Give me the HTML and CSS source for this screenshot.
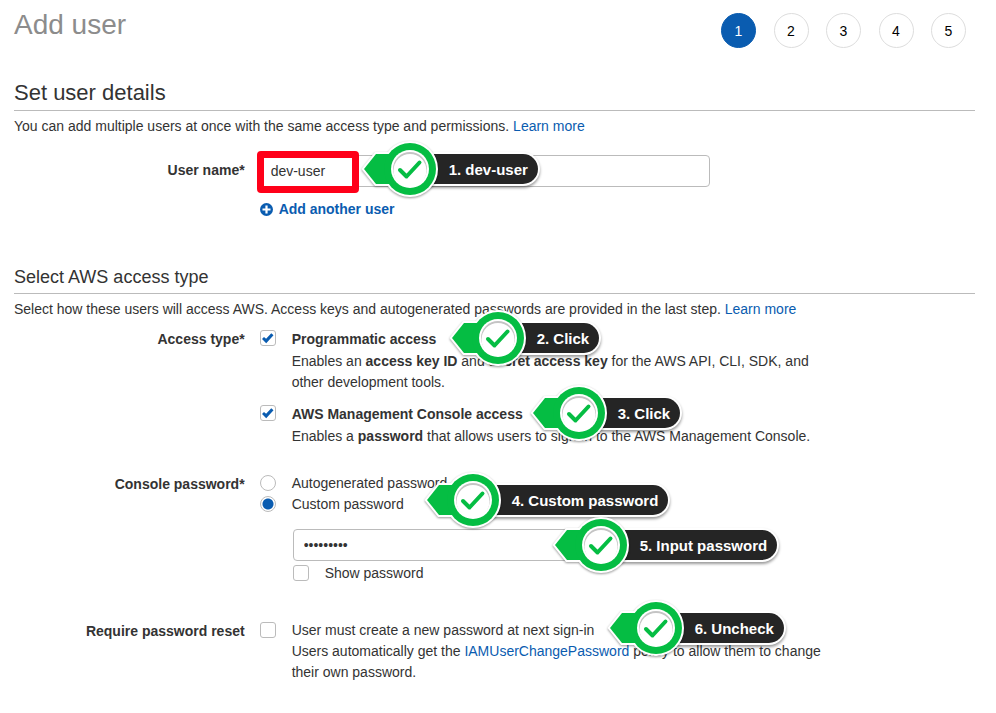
FILE: index.html
```html
<!DOCTYPE html>
<html lang="en">
<head>
<meta charset="utf-8">
<title>Add user</title>
<link rel="stylesheet" href="styles.css">
</head>
<body>
<svg class="defs" aria-hidden="true">
  <defs>
    <symbol id="pointer" viewBox="0 0 80 64">
      <path class="outline" d="M4 32 16 17H40V47H16Z"/>
      <circle class="outline" cx="50" cy="32" r="26"/>
      <path class="green" d="M4 32 16 17H40V47H16Z"/>
      <circle class="green" cx="50" cy="32" r="26"/>
      <circle cx="50" cy="32" r="19" fill="#fff"/>
      <circle cx="50" cy="32" r="17" fill="#c4c4c4"/>
      <circle cx="50" cy="33.500" r="16.500" fill="#fff"/>
      <path class="tick" d="M40 33 46.500 39.500 59.500 25.500"/>
    </symbol>
  </defs>
</svg>
<header class="top">
  <h1>Add user</h1>
  <ol class="steps">
    <li class="current" aria-current="step">1</li>
    <li>2</li>
    <li>3</li>
    <li>4</li>
    <li>5</li>
  </ol>
</header>
<main>
  <form>
    <section class="details">
      <h2>Set user details</h2>
      <p class="intro">You can add multiple users at once with the same access type and permissions. <a href="#">Learn more</a></p>
      <div class="row name-row">
        <label class="name" for="user">User name*</label>
        <div class="field">
          <input class="text" id="user" type="text" value="dev-user">
          <span class="highlight"></span>
          <div class="callout c1"><svg><use href="#pointer"/></svg><span>1. dev-user</span></div>
          <button class="add" type="button">
            <svg viewBox="0 0 14 14" aria-hidden="true"><circle cx="6.500" cy="6.500" r="6.500" fill="#0a5cb0"/><path d="M6.500 2.500V10.500M2.500 6.500H10.500" stroke="#fff" stroke-width="2.200"/></svg>
            Add another user
          </button>
        </div>
      </div>
    </section>
    <section class="access">
      <h3>Select AWS access type</h3>
      <p class="intro">Select how these users will access AWS. Access keys and autogenerated passwords are provided in the last step. <a href="#">Learn more</a></p>
      <div class="row access-row">
        <span class="name">Access type*</span>
        <div class="field">
          <div class="option">
            <input id="prog" type="checkbox" checked>
            <div>
              <label class="strong" for="prog">Programmatic access</label>
              <p>Enables an <b>access key ID</b> and <b>secret access key</b> for the AWS API, CLI, SDK, and other development tools.</p>
            </div>
            <div class="callout c2"><svg><use href="#pointer"/></svg><span>2. Click</span></div>
          </div>
          <div class="option second">
            <input id="console" type="checkbox" checked>
            <div>
              <label class="strong" for="console">AWS Management Console access</label>
              <p>Enables a <b>password</b> that allows users to sign-in to the AWS Management Console.</p>
            </div>
            <div class="callout c3"><svg><use href="#pointer"/></svg><span>3. Click</span></div>
          </div>
        </div>
      </div>
      <div class="row password-row">
        <span class="name">Console password*</span>
        <div class="field">
          <div class="option">
            <input id="auto" type="radio" name="pw">
            <label for="auto">Autogenerated password</label>
          </div>
          <div class="option">
            <input id="custom" type="radio" name="pw" checked>
            <label for="custom">Custom password</label>
            <div class="callout c4"><svg><use href="#pointer"/></svg><span>4. Custom password</span></div>
          </div>
          <div class="nested">
            <input class="text" type="password" value="password1" aria-label="Custom password">
            <div class="callout c5"><svg><use href="#pointer"/></svg><span>5. Input password</span></div>
            <div class="option">
              <input id="show" type="checkbox">
              <label for="show">Show password</label>
            </div>
          </div>
        </div>
      </div>
      <div class="row reset-row">
        <span class="name">Require password reset</span>
        <div class="field">
          <div class="option">
            <input id="reset" type="checkbox">
            <div>
              <label for="reset">User must create a new password at next sign-in</label>
              <p>Users automatically get the <a href="#">IAMUserChangePassword</a> policy to allow them to change their own password.</p>
            </div>
            <div class="callout c6"><svg><use href="#pointer"/></svg><span>6. Uncheck</span></div>
          </div>
        </div>
      </div>
    </section>
  </form>
</main>
</body>
</html>
```
FILE: styles.css
```css
* { box-sizing: border-box; }
body {
  margin: 0;
  padding: 13px 21px 24px 14px;
  background: #fff;
  color: #333;
  font: 14px/21px "Liberation Sans", Arial, sans-serif;
}
h1, h2, h3, p, ol { margin: 0; padding: 0; font-weight: normal; }
a { color: #0a5cb0; text-decoration: none; }
input, button { margin: 0; font: inherit; color: inherit; }
.defs { position: absolute; width: 0; height: 0; }

.top {
  display: flex;
  justify-content: space-between;
  align-items: flex-start;
  padding-right: 9px;
}
h1 { color: #8c8c8c; font-size: 28px; line-height: 24px; }
.steps {
  display: flex;
  justify-content: space-between;
  width: 245px;
  list-style: none;
  color: #000;
}
.steps li {
  width: 35px;
  height: 35px;
  border: 1px solid #ddd;
  border-radius: 50%;
  line-height: 34px;
  text-align: center;
}
.steps .current { background: #0a5cb0; border-color: #0a5cb0; color: #fff; }

.details { margin-top: 30px; }
.access { margin-top: 45px; }
h2 { padding-bottom: 2px; border-bottom: 1px solid #bbb; font-size: 22px; line-height: 30px; }
h3 { padding-bottom: 4px; border-bottom: 1px solid #bbb; font-size: 18px; line-height: 24px; }
.intro { margin-top: 5px; }

.row { display: grid; grid-template-columns: 24% minmax(0, 570px); column-gap: 15px; }
.name { padding-top: 1px; text-align: right; font-weight: bold; }
.field { position: relative; }
.name-row { margin-top: 18px; }
.name-row .name { padding-top: 5px; }
.access-row { margin-top: 8px; }
.password-row { margin-top: 26px; }
.reset-row { margin-top: 36px; }

.text {
  display: block;
  width: 450px;
  height: 32px;
  padding: 0 10px;
  border: 1px solid #bbb;
  border-radius: 4px;
  background: #fff;
}
.add {
  display: flex;
  align-items: center;
  gap: 5px;
  margin-top: 12px;
  padding: 0;
  border: 0;
  background: none;
  color: #0a5cb0;
  font-weight: bold;
}
.add svg { width: 14px; height: 14px; }

.option { position: relative; display: flex; gap: 16px; }
.option.second { margin-top: 10px; }
.strong { display: block; padding-bottom: 1px; font-weight: bold; line-height: 22px; }
.option input {
  flex: none;
  appearance: none;
  width: 16px;
  height: 16px;
  margin-top: 2px;
  border: 1px solid #bbb;
  border-radius: 3px;
  background: #fff;
}
.option input[type="radio"] { border-radius: 50%; }
.option input[type="radio"]:checked { background: radial-gradient(circle, #0a5cb0 5px, #fff 6px); }
.option input[type="checkbox"]:checked::before {
  content: "";
  display: block;
  width: 14px;
  height: 14px;
  background: #0a5cb0;
  clip-path: polygon(10% 58%, 24% 42%, 39% 56%, 76% 16%, 92% 31%, 40% 88%);
}
.nested { position: relative; margin: 14px 0 0 33px; }
.nested .option { margin-top: 2px; }

.highlight {
  position: absolute;
  left: -3px;
  top: -4px;
  width: 102px;
  height: 42px;
  border: 7px solid #ff0019;
  border-radius: 4px;
}
.callout {
  position: absolute;
  z-index: 1;
  height: 64px;
  padding: 17px 0 17px 60px;
  white-space: nowrap;
}
.callout svg { position: absolute; left: 0; top: 0; width: 80px; height: 64px; filter: drop-shadow(0 1px 1px #0006); }
.callout span {
  display: block;
  height: 30px;
  padding: 0 10px 0 29px;
  border-radius: 0 15px 15px 0;
  background: #252525;
  box-shadow: 0 0 0 2px #fff, 0 2px 3px 2px #0006;
  color: #fff;
  font-size: 15px;
  font-weight: bold;
  line-height: 31px;
}
.outline { fill: #fff; stroke: #fff; stroke-width: 4px; }
.green { fill: #05bd43; }
.tick { fill: none; stroke: #05bd43; stroke-width: 4px; stroke-linecap: round; stroke-linejoin: round; }
.c1 { left: 100px; top: -18px; }
.c2 { left: 188px; top: -22px; }
.c3 { left: 269px; top: -22px; }
.c4 { left: 163px; top: -26px; }
.c5 { left: 258px; top: -16px; }
.c6 { left: 346px; top: -24px; }
```
